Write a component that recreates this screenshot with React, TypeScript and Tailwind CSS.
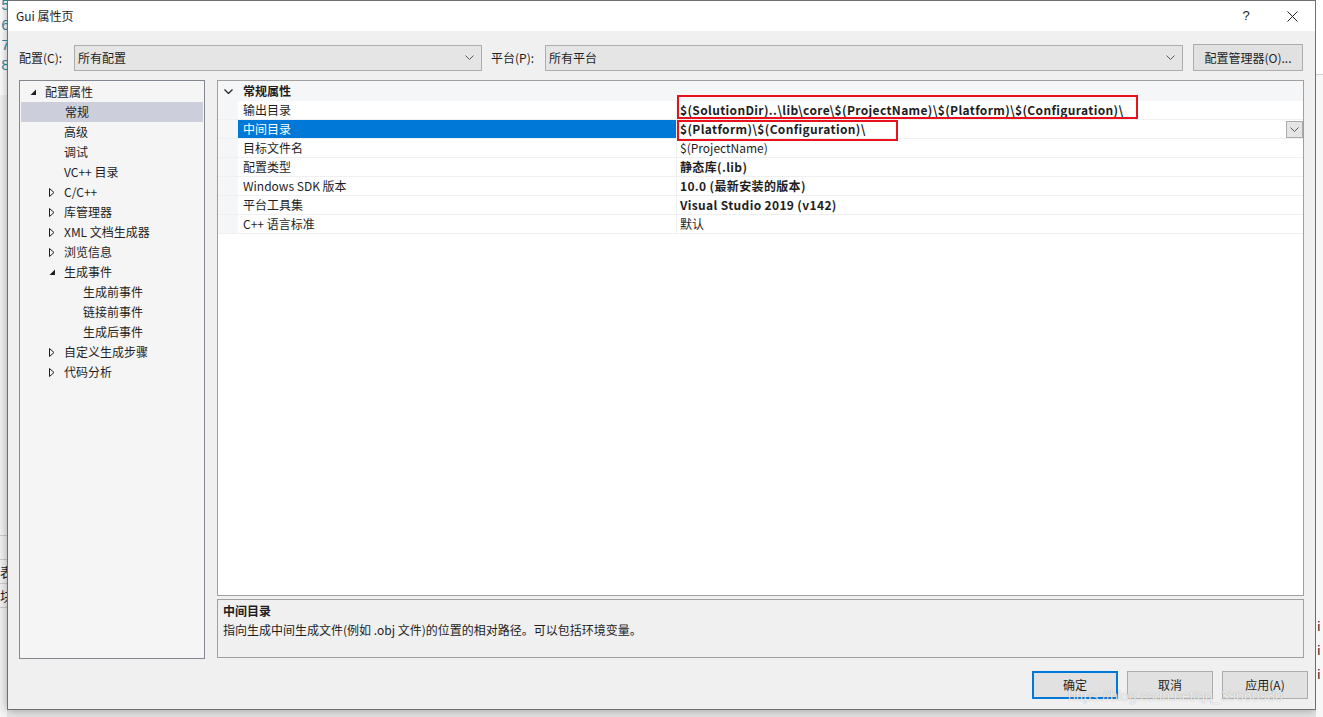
import React from "react";

type TreeItem = { label: string; level: 0 | 1 | 2; exp?: "open" | "closed"; selected?: boolean };

const tree: TreeItem[] = [
  { label: "配置属性", level: 0, exp: "open" },
  { label: "常规", level: 1, selected: true },
  { label: "高级", level: 1 },
  { label: "调试", level: 1 },
  { label: "VC++ 目录", level: 1 },
  { label: "C/C++", level: 1, exp: "closed" },
  { label: "库管理器", level: 1, exp: "closed" },
  { label: "XML 文档生成器", level: 1, exp: "closed" },
  { label: "浏览信息", level: 1, exp: "closed" },
  { label: "生成事件", level: 1, exp: "open" },
  { label: "生成前事件", level: 2 },
  { label: "链接前事件", level: 2 },
  { label: "生成后事件", level: 2 },
  { label: "自定义生成步骤", level: 1, exp: "closed" },
  { label: "代码分析", level: 1, exp: "closed" },
];

type Prop = { name: string; value: string; bold?: boolean; selected?: boolean; mark?: "wide" | "short" };

const props: Prop[] = [
  {
    name: "输出目录",
    value: "$(SolutionDir)..\\lib\\core\\$(ProjectName)\\$(Platform)\\$(Configuration)\\",
    bold: true,
    mark: "wide",
  },
  { name: "中间目录", value: "$(Platform)\\$(Configuration)\\", bold: true, selected: true, mark: "short" },
  { name: "目标文件名", value: "$(ProjectName)" },
  { name: "配置类型", value: "静态库(.lib)", bold: true },
  { name: "Windows SDK 版本", value: "10.0 (最新安装的版本)", bold: true },
  { name: "平台工具集", value: "Visual Studio 2019 (v142)", bold: true },
  { name: "C++ 语言标准", value: "默认" },
];

const levelPad = { 0: "pl-[6px]", 1: "pl-[25px]", 2: "pl-[44px]" };

function Chevron({ dark = false }: { dark?: boolean }) {
  return (
    <svg width="9" height="5" viewBox="0 0 9 5">
      <path d="M0.5 0.5 L4.5 4.5 L8.5 0.5" fill="none" stroke={dark ? "#2a2a2a" : "#5a5a5a"} strokeWidth={dark ? 1.3 : 1} />
    </svg>
  );
}

function Combo({ text, width }: { text: string; width: string }) {
  return (
    <div className={`${width} h-[26px] border border-[#adadad] bg-[#e5e5e5] flex items-center justify-between pl-[3px] pr-[7px]`}>
      <span>{text}</span>
      <Chevron />
    </div>
  );
}

function Triangle({ exp }: { exp?: "open" | "closed" }) {
  if (exp === "open")
    return (
      <svg width="7" height="7" viewBox="0 0 7 7">
        <path d="M6 0.5 L6 6 L0.5 6 Z" fill="#1e1e1e" />
      </svg>
    );
  if (exp === "closed")
    return (
      <svg width="6" height="9" viewBox="0 0 6 9">
        <path d="M0.5 0.5 L5 4.5 L0.5 8.5 Z" fill="none" stroke="#1e1e1e" strokeWidth="1" />
      </svg>
    );
  return null;
}

export default function App() {
  return (
    <div className="w-[1323px] h-[717px] overflow-hidden flex bg-[#e6e6e6] font-['Noto_Sans_CJK_SC',sans-serif] text-[12px] text-[#1e1e1e] relative">
      {/* background window, left */}
      <div className="w-[7px] h-[717px] overflow-hidden flex flex-col shrink-0">
        <div className="h-[95px] bg-white flex flex-col pl-[1px] text-[15px] leading-[20px] text-[#2b91af] font-['Liberation_Mono',monospace]">
          <span className="-mt-[3px]">5</span>
          <span>6</span>
          <span>7</span>
          <span>8</span>
        </div>
        <div className="flex-1 bg-[#f5f5f5] flex flex-col">
          <div className="h-[440px]" />
          <div className="h-[24px] border-t border-[#cfcfcf]" />
          <div className="h-[24px] border-t border-[#cfcfcf] text-[13px] leading-[24px]">表</div>
          <div className="h-[24px] border-t border-[#cfcfcf] text-[13px] leading-[24px]">块</div>
          <div className="h-[30px] border-t border-[#cfcfcf]" />
        </div>
      </div>

      {/* dialog */}
      <div className="w-[1309px] h-[710px] shrink-0 border border-[#6f6f6f] bg-[#f0f0f0] flex flex-col shadow-[0_0_10px_rgba(0,0,0,0.35)]">
        {/* title bar */}
        <div className="h-[30px] bg-white flex items-center justify-between pl-[8px] shrink-0">
          <span className="text-[12px] leading-[16px] mt-[-1px]">Gui 属性页</span>
          <div className="flex items-center h-full">
            <span className="w-[46px] text-center text-[13px] font-['Liberation_Sans',sans-serif]">?</span>
            <div className="w-[46px] h-full flex items-center justify-center">
              <svg width="11" height="11" viewBox="0 0 11 11">
                <path d="M0.5 0.5 L10.5 10.5 M10.5 0.5 L0.5 10.5" stroke="#1e1e1e" strokeWidth="1" />
              </svg>
            </div>
          </div>
        </div>

        {/* configuration toolbar */}
        <div className="mt-[13px] h-[27px] flex items-center pl-[11px] shrink-0">
          <span className="w-[55px]">配置(C):</span>
          <Combo text="所有配置" width="w-[408px]" />
          <span className="ml-[9px] w-[54px]">平台(P):</span>
          <Combo text="所有平台" width="w-[638px]" />
          <div className="ml-[10px] w-[110px] h-[27px] border border-[#adadad] bg-[#e1e1e1] flex items-center justify-center">
            配置管理器(O)...
          </div>
        </div>

        {/* main panels */}
        <div className="mt-[9px] flex pl-[11px] gap-[12px] shrink-0">
          {/* tree */}
          <div className="w-[186px] h-[579px] border border-[#828790] bg-[#f5f5f5] flex flex-col pt-[1px]">
            {tree.map((t) => (
              <div
                key={t.label}
                className={`h-[20px] flex items-center leading-[20px] ${levelPad[t.level]} ${
                  t.selected ? "bg-[#cccedb] mx-[1px]" : ""
                }`}
              >
                <div className="w-[19px] flex items-center pl-[4px]">
                  <Triangle exp={t.exp} />
                </div>
                <span>{t.label}</span>
              </div>
            ))}
          </div>

          {/* property grid + description */}
          <div className="flex flex-col gap-[3px]">
            <div className="w-[1087px] h-[516px] border border-[#a0a0a0] bg-white flex flex-col">
              <div className="h-[20px] bg-[#f5f6f8] flex items-center">
                <div className="w-[20px] flex justify-center pl-[1px]">
                  <Chevron dark />
                </div>
                <span className="pl-[5px] font-bold">常规属性</span>
              </div>
              {props.map((p) => (
                <div key={p.name} className="h-[19px] flex border-b border-[#f0f0f0] relative">
                  <div className="w-[20px] bg-[#f5f6f8]" />
                  <div
                    className={`w-[439px] border-r border-[#f0f0f0] pl-[5px] flex items-center ${
                      p.selected ? "bg-[#0078d7] text-white" : ""
                    }`}
                  >
                    {p.name}
                  </div>
                  <div
                    className={`flex-1 pl-[3px] flex items-center justify-between relative ${
                      p.bold ? "font-bold tracking-[0.35px]" : ""
                    }`}
                  >
                    <span>{p.value}</span>
                    {p.selected && (
                      <div className="w-[17px] h-[17px] border border-[#acacac] bg-[#e5e5e5] flex items-center justify-center">
                        <Chevron />
                      </div>
                    )}
                    {p.mark === "wide" && (
                      <div className="absolute left-0 top-[-6px] w-[461px] h-[24px] border-2 border-[#e8121c]" />
                    )}
                    {p.mark === "short" && (
                      <div className="absolute left-0 top-0 w-[221px] h-[21px] border-2 border-[#e8121c]" />
                    )}
                  </div>
                </div>
              ))}
            </div>
            <div className="w-[1087px] h-[59px] border border-[#a0a0a0] bg-[#f0f0f0] flex flex-col pl-[5px] pt-[1px] leading-[19px]">
              <span className="font-bold">中间目录</span>
              <span>指向生成中间生成文件(例如 .obj 文件)的位置的相对路径。可以包括环境变量。</span>
            </div>
          </div>
        </div>

        {/* buttons */}
        <div className="mt-[12px] flex justify-end gap-[9px] pr-[7px] shrink-0">
          <div className="w-[86px] h-[28px] border-2 border-[#0078d7] bg-[#e1e1e1] flex items-center justify-center">确定</div>
          <div className="w-[86px] h-[28px] border border-[#adadad] bg-[#e1e1e1] flex items-center justify-center">取消</div>
          <div className="w-[86px] h-[28px] border border-[#adadad] bg-[#e1e1e1] flex items-center justify-center">应用(A)</div>
        </div>
      </div>

      {/* background window, right */}
      <div className="flex-1 h-[717px] flex flex-col bg-[#f7f7f7]">
        <div className="h-[74px] bg-white" />
        <div className="h-[540px] border-t border-[#d0d0d0]" />
        <div className="text-[13px] leading-[24px] flex flex-col pl-[1px]">
          <span>i</span>
          <span>i</span>
          <span>i</span>
        </div>
      </div>

      {/* watermark */}
      <span className="absolute left-[1068px] top-[687px] text-[14px] leading-[18px] font-['Liberation_Sans',sans-serif] text-white/80 [text-shadow:0_0_1px_rgba(0,0,0,0.35)]">
        https://blog.csdn.net/qq_39660930
      </span>
    </div>
  );
}
